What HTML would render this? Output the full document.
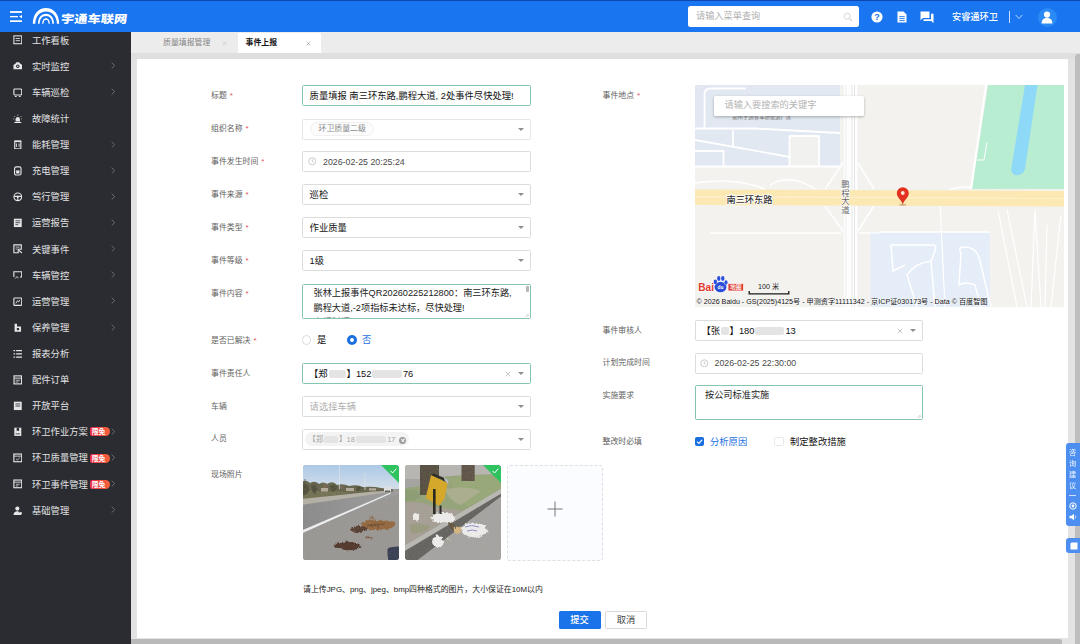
<!DOCTYPE html>
<html lang="zh-CN">
<head>
<meta charset="utf-8">
<title>事件上报</title>
<style>
*{box-sizing:border-box;margin:0;padding:0}
html,body{width:1080px;height:644px;overflow:hidden;background:#e3e3e3;font-family:"Liberation Sans","Noto Sans CJK SC",sans-serif;color:#333}
.abs{position:absolute}
#hdr{position:absolute;left:0;top:0;width:1080px;height:31.800px;background:#1975f0;border-top:1px solid #0d48b0;z-index:5}
#side{position:absolute;left:0;top:31px;width:131px;height:613px;background:#2a2c32;border-top:1px solid #2a2c32;z-index:4}
#tabs{position:absolute;left:131px;top:31px;width:949px;height:22px;background:#ececec;padding-top:1px}
#card{position:absolute;left:137px;top:59px;width:930.900px;height:579.300px;background:#fff}
.mi{position:absolute;left:0;width:131px;height:26px;color:#e2e2e2;font-size:9.3px;line-height:26px}
.mi .t{position:absolute;left:32px;top:0.600px;white-space:nowrap}
.mi svg.ic{position:absolute;left:12.800px;top:8.400px;width:9.600px;height:9.600px}
.mi .ar{position:absolute;left:111.500px;top:9.300px;width:4.400px;height:7.200px}
.badge{position:absolute;left:89.800px;top:8.700px;width:20px;height:9px;background:linear-gradient(90deg,#e9304c,#f4633a);border-radius:2px 4.500px 4.500px 2px;color:#fff;font-size:6.800px;line-height:9px;text-align:left;padding-left:2px;font-weight:bold}
.lb{position:absolute;margin-left:-0.500px;margin-top:0.700px;font-size:7.900px;color:#5f5f5f;line-height:12px;white-space:nowrap}
.lb i{font-style:normal;color:#e9505a;margin-left:3px}
.in{position:absolute;height:21px;border:1px solid #dcdcdc;border-radius:1.5px;background:#fff;font-size:9.2px;line-height:19px;color:#222;white-space:nowrap;overflow:hidden}
.in.f{border-color:#84c5b2}
.in .v{position:absolute;left:6.600px;top:0.700px;font-size:9.300px;color:#111}
.car{position:absolute;right:5.600px;top:8.200px;width:0;height:0;border-left:3.100px solid transparent;border-right:3.100px solid transparent;border-top:3.900px solid #8e8e8e}
.in .v.ph{color:#b0b0b0}

.tag{position:absolute;height:14px;line-height:12.600px;padding:0 7.500px;border:1px solid #f0f0f0;border-radius:7px;background:#fcfcfc;color:#8a8a8a;font-size:7.900px}
.tag2{position:absolute;height:13.200px;line-height:15.200px;padding:0 3.400px 0 2.900px;border-radius:7px;background:#f3f3f3;color:#a8a8a8;font-size:7.500px}
.tag2 b{display:inline-block;width:7px;height:7px;border-radius:50%;background:#9c9c9c;vertical-align:-1.200px;margin-left:1.300px;position:relative}
.tag2 b:before,.tag2 b:after{content:"";position:absolute;left:1.700px;top:3.150px;width:3.600px;height:0.700px;background:#fff;transform:rotate(45deg)}
.tag2 b:after{transform:rotate(-45deg)}
.blr{display:inline-block;height:8px;background:#e4e4e4;border-radius:2px;vertical-align:-1px;filter:blur(0.6px);margin:0 1px}
.ta{position:absolute;left:10.5px;top:1.5px;font-size:9.2px;line-height:15.3px;color:#222;white-space:nowrap}
.rad{width:9.500px;height:9.500px;border:1px solid #dcdcdc;border-radius:50%;background:#fff;margin-top:0.900px}
.rad.on{border:3px solid #1a6fe0;width:10px;height:10px}
.rt{font-size:9.300px;line-height:13px;white-space:nowrap;margin-top:0.900px}
.cb{width:9.500px;height:9.500px;border:1px solid #e8e8e8;border-radius:1.5px;background:#fff}
.cb.on{background:#1a6fe0;border-color:#1a6fe0}
</style>
</head>
<body>
<div id="hdr">
<svg class="abs" style="left:9.800px;top:10.100px" width="12.500" height="11.400" viewBox="0 0 12.500 11.400"><g fill="#fff"><rect x="0" y="0.100" width="12.500" height="1.800"/><rect x="0" y="5" width="8" height="1.300"/><rect x="0" y="9.300" width="12.500" height="2"/><path d="M9.100 5.600L12.500 3.700V7.500Z"/></g></svg>
<svg class="abs" style="left:31.600px;top:6.300px" width="28" height="17.600" preserveAspectRatio="none" viewBox="0 0 28 17"><g fill="#fff"><path d="M0.800 16.300C0.800 7 6.500 1 14 1S27.200 7 27.200 16.300L24.900 16.300C24.900 9.500 20.500 4.300 14 4.300S3.300 9.500 3.300 16.300Z"/><path d="M6 16.300C6 10.500 9 6.500 14 6.500S22 10.500 22 16.300L20.300 16.300C20.300 11.800 18 8.700 14 8.700S7.700 11.800 7.700 16.300Z"/><path d="M10.200 16.300C10.200 13 11.600 10.800 14 10.800S17.800 13 17.800 16.300L16.500 16.300C16.500 13.800 15.700 12.400 14 12.400S11.500 13.800 11.500 16.300Z"/></g></svg>
<div class="abs" style="left:61px;top:8.100px;font-size:11.300px;line-height:20px;font-weight:900;color:#fff;transform-origin:0 50%;transform:scaleX(1.170) skewX(-6deg);white-space:nowrap">宇通车联网</div>
<div class="abs" style="left:688px;top:4.5px;width:171px;height:21px;background:#fff;border-radius:2.5px"></div>
<div class="abs" style="left:696px;top:4.5px;font-size:9.2px;line-height:21px;color:#b0b0b0;white-space:nowrap">请输入菜单查询</div>
<svg class="abs" style="left:843px;top:10.5px" width="10" height="10" viewBox="0 0 10 10"><circle cx="4.2" cy="4.2" r="3" fill="none" stroke="#d6d6d6" stroke-width="1"/><path d="M6.4 6.400L9 9" stroke="#d6d6d6" stroke-width="1.100"/></svg>
<svg class="abs" style="left:871px;top:10px" width="12" height="12" viewBox="0 0 12 12"><circle cx="6" cy="6" r="5.6" fill="#fff"/><text x="6" y="9.2" font-size="9" font-weight="bold" text-anchor="middle" fill="#1a74ee" font-family="Liberation Sans, sans-serif">?</text></svg>
<svg class="abs" style="left:897px;top:10px" width="10" height="12" viewBox="0 0 10 12"><path d="M0.5 0.5H6.5L9.5 3.5V11.5H0.5Z" fill="#fff"/><path d="M2.3 5.6H7.7M2.3 7.6H7.7M2.3 9.6H7.7" stroke="#1a74ee" stroke-width="0.9"/></svg>
<svg class="abs" style="left:920px;top:9.5px" width="14" height="13" viewBox="0 0 14 13"><path d="M0.5 0.5H9.5V7H3L0.5 9.2Z" fill="#fff"/><path d="M11 2.8H13.5V12.3L11.2 10H3.5V8.2H11Z" fill="#fff"/></svg>
<div class="abs" style="left:952px;top:6px;font-size:9.2px;line-height:20px;color:#fff;font-weight:500;white-space:nowrap">安睿通环卫</div>
<div class="abs" style="left:1008.5px;top:10px;width:1px;height:12px;background:#cfe0fb"></div>
<svg class="abs" style="left:1015px;top:12.5px" width="8" height="6" viewBox="0 0 8 6"><path d="M0.7 1L4 4.5L7.3 1" fill="none" stroke="#cfe0fb" stroke-width="0.9"/></svg>
<div class="abs" style="left:1037.5px;top:6.5px;width:19px;height:19px;border-radius:50%;background:#2b8af5"></div>
<svg class="abs" style="left:1041px;top:9.5px" width="12" height="13" viewBox="0 0 12 13"><circle cx="6" cy="3.6" r="3.1" fill="#fff"/><path d="M0.6 12.5C0.6 8.6 2.8 7 6 7S11.4 8.6 11.4 12.5Z" fill="#fff"/></svg>
</div>
<div id="side">
<div class="mi" style="top:-5.0px"><svg class="ic" viewBox="0 0 11 11"><rect x="1" y="1" width="9" height="9" fill="none" stroke="#e6e6e6" stroke-width="1.2"/><path d="M3 4H8M3 6.5H8" stroke="#e6e6e6" stroke-width="1"/></svg><span class="t">工作看板</span></div>
<div class="mi" style="top:21.1px"><svg class="ic" viewBox="0 0 11 11"><path d="M0.5 4.5L3 3L4 1.5H7L8 3L10.5 4.5V9.5H0.5Z" fill="#e6e6e6"/><circle cx="5.5" cy="6" r="1.9" fill="#2a2c32"/><circle cx="5.5" cy="6" r="0.9" fill="#e6e6e6"/></svg><span class="t">实时监控</span><svg class="ar" style="left:111px" viewBox="0 0 5 8"><path d="M0.8 0.6L4.2 4L0.8 7.4" fill="none" stroke="#7d7f86" stroke-width="0.9"/></svg></div>
<div class="mi" style="top:47.2px"><svg class="ic" viewBox="0 0 11 11"><rect x="1" y="1.2" width="9" height="6.8" rx="1" fill="none" stroke="#e6e6e6" stroke-width="1.3"/><path d="M2.2 9.8H4.2M6.8 9.8H8.8" stroke="#e6e6e6" stroke-width="1.4"/></svg><span class="t">车辆巡检</span><svg class="ar" style="left:111px" viewBox="0 0 5 8"><path d="M0.8 0.6L4.2 4L0.8 7.4" fill="none" stroke="#7d7f86" stroke-width="0.9"/></svg></div>
<div class="mi" style="top:73.4px"><svg class="ic" viewBox="0 0 11 11"><path d="M3 8.5V6A2.5 2.5 0 0 1 8 6V8.5Z" fill="#e6e6e6"/><path d="M1.5 9.8H9.5" stroke="#e6e6e6" stroke-width="1.3"/><path d="M5.5 0.6V2M1.3 2.3L2.3 3.3M9.7 2.3L8.7 3.3M0.3 5.6H1.6M9.4 5.6H10.7" stroke="#e6e6e6" stroke-width="0.8"/></svg><span class="t">故障统计</span></div>
<div class="mi" style="top:99.5px"><svg class="ic" viewBox="0 0 11 11"><rect x="2" y="1.8" width="7" height="8.4" fill="none" stroke="#e6e6e6" stroke-width="1.3"/><path d="M1.5 1H9.5" stroke="#e6e6e6" stroke-width="1.2"/><path d="M4 4V8M7 4V8" stroke="#e6e6e6" stroke-width="1"/></svg><span class="t">能耗管理</span><svg class="ar" style="left:111px" viewBox="0 0 5 8"><path d="M0.8 0.6L4.2 4L0.8 7.4" fill="none" stroke="#7d7f86" stroke-width="0.9"/></svg></div>
<div class="mi" style="top:125.6px"><svg class="ic" viewBox="0 0 11 11"><rect x="1.8" y="1" width="7.4" height="9.3" rx="1.8" fill="none" stroke="#e6e6e6" stroke-width="1.3"/><rect x="3.6" y="5" width="3.8" height="3.6" fill="#e6e6e6"/></svg><span class="t">充电管理</span><svg class="ar" style="left:111px" viewBox="0 0 5 8"><path d="M0.8 0.6L4.2 4L0.8 7.4" fill="none" stroke="#7d7f86" stroke-width="0.9"/></svg></div>
<div class="mi" style="top:151.7px"><svg class="ic" viewBox="0 0 11 11"><circle cx="5.5" cy="5.5" r="4.4" fill="none" stroke="#e6e6e6" stroke-width="1.3"/><path d="M1.3 5H9.7M5.5 6V9.8" stroke="#e6e6e6" stroke-width="1.2"/><circle cx="5.5" cy="5.6" r="1.2" fill="#e6e6e6"/></svg><span class="t">驾行管理</span><svg class="ar" style="left:111px" viewBox="0 0 5 8"><path d="M0.8 0.6L4.2 4L0.8 7.4" fill="none" stroke="#7d7f86" stroke-width="0.9"/></svg></div>
<div class="mi" style="top:177.8px"><svg class="ic" viewBox="0 0 11 11"><rect x="1" y="0.8" width="9" height="9.6" fill="#e6e6e6"/><path d="M2.8 3.2H8.2M2.8 5.4H8.2M2.8 7.6H6" stroke="#2a2c32" stroke-width="0.9"/></svg><span class="t">运营报告</span><svg class="ar" style="left:111px" viewBox="0 0 5 8"><path d="M0.8 0.6L4.2 4L0.8 7.4" fill="none" stroke="#7d7f86" stroke-width="0.9"/></svg></div>
<div class="mi" style="top:204.0px"><svg class="ic" viewBox="0 0 11 11"><path d="M1 1H9.5V6H6V10H1Z" fill="none" stroke="#e6e6e6" stroke-width="1.3"/><path d="M3 3.6H7.5M3 5.8H5" stroke="#e6e6e6" stroke-width="0.9"/><path d="M7 7.5L10.3 10.3" stroke="#e6e6e6" stroke-width="1.3"/></svg><span class="t">关键事件</span><svg class="ar" style="left:111px" viewBox="0 0 5 8"><path d="M0.8 0.6L4.2 4L0.8 7.4" fill="none" stroke="#7d7f86" stroke-width="0.9"/></svg></div>
<div class="mi" style="top:230.1px"><svg class="ic" viewBox="0 0 11 11"><path d="M1 8V2H10V8H8" fill="none" stroke="#e6e6e6" stroke-width="1.3"/><path d="M2.5 9.8L4.6 7.6L6.2 9.4" fill="none" stroke="#e6e6e6" stroke-width="1"/></svg><span class="t">车辆管控</span><svg class="ar" style="left:111px" viewBox="0 0 5 8"><path d="M0.8 0.6L4.2 4L0.8 7.4" fill="none" stroke="#7d7f86" stroke-width="0.9"/></svg></div>
<div class="mi" style="top:256.2px"><svg class="ic" viewBox="0 0 11 11"><rect x="1" y="1.2" width="9" height="8.4" rx="0.8" fill="none" stroke="#e6e6e6" stroke-width="1.3"/><path d="M3.3 7.3L5.2 4.2L6.3 5.8L7.8 3.4" fill="none" stroke="#e6e6e6" stroke-width="1"/></svg><span class="t">运营管理</span><svg class="ar" style="left:111px" viewBox="0 0 5 8"><path d="M0.8 0.6L4.2 4L0.8 7.4" fill="none" stroke="#7d7f86" stroke-width="0.9"/></svg></div>
<div class="mi" style="top:282.3px"><svg class="ic" viewBox="0 0 11 11"><path d="M1.8 0.8V10H9.2V4H4.6V0.8Z" fill="#e6e6e6"/><rect x="4.4" y="5.8" width="2.6" height="2.4" fill="#2a2c32"/></svg><span class="t">保养管理</span><svg class="ar" style="left:111px" viewBox="0 0 5 8"><path d="M0.8 0.6L4.2 4L0.8 7.4" fill="none" stroke="#7d7f86" stroke-width="0.9"/></svg></div>
<div class="mi" style="top:308.4px"><svg class="ic" viewBox="0 0 11 11"><path d="M3.6 1.8H10.4M3.6 5.5H10.4M3.6 9.2H10.4" stroke="#e6e6e6" stroke-width="1.4"/><path d="M0.6 1.8H2.4M0.6 5.5H2.4M0.6 9.2H2.4" stroke="#e6e6e6" stroke-width="1.4"/></svg><span class="t">报表分析</span></div>
<div class="mi" style="top:334.6px"><svg class="ic" viewBox="0 0 11 11"><rect x="1.2" y="1" width="8.6" height="9.2" fill="none" stroke="#e6e6e6" stroke-width="1.3"/><path d="M1.5 3.6H9.5" stroke="#e6e6e6" stroke-width="1.1"/><path d="M3 6H8M3 8H6.5" stroke="#e6e6e6" stroke-width="0.9"/></svg><span class="t">配件订单</span></div>
<div class="mi" style="top:360.7px"><svg class="ic" viewBox="0 0 11 11"><rect x="1" y="0.8" width="9" height="9.6" fill="#e6e6e6"/><path d="M2.8 3.4H8.2M2.8 5.8H8.2" stroke="#2a2c32" stroke-width="1"/></svg><span class="t">开放平台</span></div>
<div class="mi" style="top:386.8px"><svg class="ic" viewBox="0 0 11 11"><path d="M1.5 0.8H9.5V10.2H1.5Z" fill="#e6e6e6"/><path d="M4.2 0.8V5L5.6 4L7 5V0.8Z" fill="#2a2c32"/><path d="M3 7.8H8" stroke="#2a2c32" stroke-width="0.9"/></svg><span class="t">环卫作业方案</span><span class="badge">限免</span><svg class="ar" style="left:111.300px" viewBox="0 0 5 8"><path d="M0.8 0.6L4.2 4L0.8 7.4" fill="none" stroke="#7d7f86" stroke-width="0.9"/></svg></div>
<div class="mi" style="top:412.9px"><svg class="ic" viewBox="0 0 11 11"><rect x="1" y="1.2" width="9" height="8.8" fill="none" stroke="#e6e6e6" stroke-width="1.3"/><path d="M1 3.6H10" stroke="#e6e6e6" stroke-width="1"/><path d="M3.4 6.6L5 8L7.8 5.4" fill="none" stroke="#e6e6e6" stroke-width="0.9"/></svg><span class="t">环卫质量管理</span><span class="badge">限免</span><svg class="ar" style="left:111.300px" viewBox="0 0 5 8"><path d="M0.8 0.6L4.2 4L0.8 7.4" fill="none" stroke="#7d7f86" stroke-width="0.9"/></svg></div>
<div class="mi" style="top:439.0px"><svg class="ic" viewBox="0 0 11 11"><rect x="1" y="1.2" width="9" height="8.8" fill="none" stroke="#e6e6e6" stroke-width="1.3"/><path d="M1 3.6H10" stroke="#e6e6e6" stroke-width="1"/><path d="M3.2 6H7.8M3.2 8H6" stroke="#e6e6e6" stroke-width="0.9"/></svg><span class="t">环卫事件管理</span><span class="badge">限免</span><svg class="ar" style="left:111.300px" viewBox="0 0 5 8"><path d="M0.8 0.6L4.2 4L0.8 7.4" fill="none" stroke="#7d7f86" stroke-width="0.9"/></svg></div>
<div class="mi" style="top:465.2px"><svg class="ic" viewBox="0 0 11 11"><circle cx="5" cy="3" r="2.4" fill="#e6e6e6"/><path d="M0.6 10.4C0.6 7.4 2.4 6 5 6S9.4 7.4 9.4 10.4Z" fill="#e6e6e6"/><path d="M6.2 6.4L10.6 10.6" stroke="#2a2c32" stroke-width="0.9"/><circle cx="8.7" cy="8.4" r="1.5" fill="#e6e6e6"/></svg><span class="t">基础管理</span><svg class="ar" style="left:111px" viewBox="0 0 5 8"><path d="M0.8 0.6L4.2 4L0.8 7.4" fill="none" stroke="#7d7f86" stroke-width="0.9"/></svg></div>
</div>
<div id="tabs">
<div class="abs" style="left:107px;top:1.5px;width:83px;height:20.200px;background:#fff"></div>
<div class="abs" style="left:32px;top:1.200px;font-size:7.900px;line-height:21px;color:#858585;white-space:nowrap">质量填报管理</div>
<svg class="abs" style="left:91px;top:9.5px" width="5" height="5" viewBox="0 0 5 5"><path d="M0.7 0.7L4.3 4.3M4.3 0.7L0.7 4.3" stroke="#bdbdbd" stroke-width="0.600"/></svg>
<div class="abs" style="left:114.500px;top:1.200px;font-size:7.9px;line-height:21px;color:#111;font-weight:bold;white-space:nowrap">事件上报</div>
<svg class="abs" style="left:175px;top:9.5px" width="5" height="5" viewBox="0 0 5 5"><path d="M0.7 0.7L4.3 4.3M4.3 0.7L0.7 4.3" stroke="#999" stroke-width="0.6"/></svg>
</div>
<div id="card">
<div class="lb" style="left:74.5px;top:30.6px">标题<i>*</i></div>
<div class="in f" style="left:165.0px;top:26.3px;width:229.0px;height:21.0px"><span class="v">质量填报 南三环东路,鹏程大道, 2处事件尽快处理!</span></div>
<div class="lb" style="left:74.5px;top:63.5px">组织名称<i>*</i></div>
<div class="in " style="left:165.0px;top:59.600px;width:229.0px;height:21.200px;border-color:#e6e6e6"><span class="tag" style="left:7px;top:2.800px">环卫质量二级</span><span class="car"></span></div>
<div class="lb" style="left:74.5px;top:96.4px">事件发生时间<i>*</i></div>
<div class="in " style="left:165.0px;top:92.0px;width:229.0px;height:21.0px"><svg class="abs" style="left:4.800px;top:5.300px" width="8.600" height="8.600" viewBox="0 0 8 8"><circle cx="4" cy="4" r="3.3" fill="none" stroke="#bbb" stroke-width="0.7"/><path d="M4 2V4.2L5.4 5" fill="none" stroke="#bbb" stroke-width="0.7"/></svg><span class="v" style="left:20px;color:#4a4a4a;font-size:8.800px">2026-02-25 20:25:24</span></div>
<div class="lb" style="left:74.5px;top:129.3px">事件来源<i>*</i></div>
<div class="in " style="left:165.0px;top:125.2px;width:229.0px;height:21.0px"><span class="v">巡检</span><span class="car"></span></div>
<div class="lb" style="left:74.5px;top:162.2px">事件类型<i>*</i></div>
<div class="in " style="left:165.0px;top:158.2px;width:229.0px;height:21.0px"><span class="v">作业质量</span><span class="car"></span></div>
<div class="lb" style="left:74.5px;top:195.2px">事件等级<i>*</i></div>
<div class="in " style="left:165.0px;top:191.0px;width:229.0px;height:21.0px"><span class="v">1级</span><span class="car"></span></div>
<div class="lb" style="left:74.5px;top:228.0px">事件内容<i>*</i></div>
<div class="in f" style="left:165.0px;top:224.5px;width:229.0px;height:35.0px"><div class="ta">张林上报事件QR20260225212800：南三环东路,<br>鹏程大道,-2项指标未达标，尽快处理!</div><div class="ta" style="top:30.800px;color:#888">上报时间：2026-02-25 20:25:24</div><span class="abs" style="right:1px;top:1px;width:3px;height:6px;background:#b5b5b5;border-radius:1px"></span><svg class="abs" style="right:1px;bottom:1px" width="4" height="4" viewBox="0 0 4 4"><path d="M0.5 3.8L3.8 0.5M2.2 3.8L3.8 2.2" stroke="#999" stroke-width="0.5"/></svg></div>
<div class="lb" style="left:74.5px;top:275.5px">是否已解决<i>*</i></div>
<span class="abs rad" style="left:164.5px;top:275.5px"></span><span class="abs rt" style="left:180px;top:274px;color:#111">是</span>
<span class="abs rad on" style="left:209.5px;top:275.5px"></span><span class="abs rt" style="left:225px;top:274px;color:#1a6fe0">否</span>
<div class="lb" style="left:74.5px;top:308.0px">事件责任人</div>
<div class="in f" style="left:165.0px;top:304.0px;width:229.0px;height:21.0px"><span class="v" style="left:6px">【郑<span class="blr" style="width:17px"></span>】152<span class="blr" style="width:29.500px"></span>76</span><svg class="abs" style="right:19px;top:7px" width="6" height="6" viewBox="0 0 6 6"><path d="M0.7 0.7L5.3 5.3M5.3 0.7L0.7 5.3" stroke="#aaa" stroke-width="0.7"/></svg><span class="car"></span></div>
<div class="lb" style="left:74.5px;top:341.0px">车辆</div>
<div class="in " style="left:165.0px;top:337.0px;width:229.0px;height:21.0px"><span class="v ph">请选择车辆</span><span class="car"></span></div>
<div class="lb" style="left:74.5px;top:373.8px">人员</div>
<div class="in " style="left:165.0px;top:369.6px;width:229.0px;height:21.0px"><span class="tag2" style="left:2.400px;top:2.900px">【郑<span class="blr" style="width:13.700px;height:7px"></span>】18<span class="blr" style="width:30.400px;height:7px"></span>17 <b></b></span><span class="car"></span></div>
<div class="lb" style="left:74.5px;top:409.0px">现场照片</div>
<div class="abs ph1" style="left:165.800px;top:405.500px;width:95.800px;height:95.600px;border-radius:3px;overflow:hidden">
<svg width="96" height="96" viewBox="0 0 96 96" style="position:absolute;left:0;top:0">
<defs><filter id="pb" x="-10%" y="-10%" width="120%" height="120%"><feGaussianBlur stdDeviation="0.550"/></filter>
<filter id="pb2" x="-20%" y="-20%" width="140%" height="140%"><feTurbulence type="fractalNoise" baseFrequency="0.350" numOctaves="2" seed="4" result="n"/><feDisplacementMap in="SourceGraphic" in2="n" scale="5" xChannelSelector="R" yChannelSelector="G"/><feGaussianBlur stdDeviation="0.600"/></filter>
<filter id="gr" x="0" y="0" width="100%" height="100%"><feTurbulence type="fractalNoise" baseFrequency="0.900" numOctaves="2" seed="7"/><feColorMatrix type="matrix" values="0 0 0 0 0.500  0 0 0 0 0.500  0 0 0 0 0.500  0.350 0.350 0 -0.180 0"/></filter>
<linearGradient id="sky" x1="0" y1="0" x2="0" y2="1"><stop offset="0" stop-color="#a8c9ee"/><stop offset="1" stop-color="#d6e4f0"/></linearGradient>
<linearGradient id="rd1" x1="0" y1="0" x2="1" y2="0"><stop offset="0" stop-color="#858585"/><stop offset="1" stop-color="#9a9a9a"/></linearGradient></defs>
<rect width="96" height="96" fill="#969390"/>
<g filter="url(#pb)">
<rect x="-2" y="-2" width="100" height="26" fill="url(#sky)"/>
<path d="M-2 34L96 24V98H-2Z" fill="#969390"/>
<path d="M-2 38L88 26L96 25V29L-2 68Z" fill="url(#rd1)"/>
<path d="M-2 17Q3 14 7 18Q12 15 16 19Q20 16 24 19Q30 15 34 20Q40 18 46 21Q54 19 60 22Q70 21 78 23L90 24.500V26.500L-2 36Z" fill="#5c5a40"/>
<path d="M-2 26Q10 24 20 27Q30 25 40 27L60 26L-2 35Z" fill="#6d6a48"/>
<path d="M-2 34L70 26.500L88 25.800V26.800L-2 40Z" fill="#b4afa3"/>
<path d="M18 23H25V26.500H18ZM43 23H51V26H43ZM66 23.300H73V25.500H66Z" fill="#b3a898"/>
<path d="M-2 20Q2 17 5 21Q8 25 4 29L-2 31ZM8 21Q11 18 14 22Q15 27 10 28ZM27 21Q31 18 34 22Q34 26 29 27ZM53 22Q56 20 59 23Q58 26 54 26Z" fill="#47462f"/>
<path d="M20 19Q23 17 25 20L24 23H20ZM36 21Q39 19 41 22L40 24H36Z" fill="#6d5f48"/>
<path d="M2 14V30M12 18V30" stroke="#4a4434" stroke-width="0.800"/>
<path d="M36.400 0V24M62 8V25" stroke="#e4ebf0" stroke-width="0.700"/>
<rect x="81" y="22" width="7" height="4.800" rx="1.200" fill="#e6e6e6"/>
<rect x="82" y="25.500" width="5" height="1.600" fill="#555"/>
<path d="M-2 65.800L87 27.800L88 28.600L-2 68.800Z" fill="#f4f4f4"/>
</g>
<g filter="url(#pb2)">
<path d="M58 60Q64 53 74 55Q86 54 93 58Q92 64 80 64Q68 66 58 64Z" fill="#8f5e30"/>
<path d="M64 60Q72 57 82 59Q78 62 68 62Z" fill="#6b4426"/>
<path d="M66 52Q70 50 72 53Q69 55 66 52Z" fill="#8a6a48"/>
<path d="M47 64Q52 60 60 61Q66 63 62 66Q54 68 47 66Z" fill="#4e3222"/>
<path d="M31 80Q36 76 46 77Q58 78 59 82Q52 86 42 85Q32 84 31 80Z" fill="#47291c"/>
<path d="M62 72Q66 70 70 73Q66 75 62 72Z" fill="#7a5238"/>
</g>
<path d="M84.500 84Q85 81.500 96 81.500V96H85.500Q84 90 84.500 84Z" fill="#2b3246" filter="url(#pb)"/>
<rect width="96" height="96" filter="url(#gr)" opacity="0.500"/>
<path d="M78 0H93Q96 0 96 3V18Z" fill="#2fc35f"/>
<path d="M87.500 5.800L89.600 8L93.300 3.600" fill="none" stroke="#fff" stroke-width="1"/>
</svg></div>
<div class="abs ph2" style="left:267.800px;top:405.500px;width:95.800px;height:95.600px;border-radius:3px;overflow:hidden">
<svg width="96" height="96" viewBox="0 0 96 96" style="position:absolute;left:0;top:0">
<rect width="96" height="96" fill="#a3a19e"/>
<g filter="url(#pb)">
<rect x="-2" y="-2" width="100" height="16" fill="#b7b5b1"/>
<path d="M-2 24Q12 20 22 22L34 12L60 10L98 9V26L50 56L-2 50Z" fill="#91a172"/>
<path d="M44 14Q70 8 98 12V22L62 42Q50 30 44 14Z" fill="#94a670"/>
<path d="M40 24Q60 20 76 26L56 40Q44 36 40 24Z" fill="#a9ad8a"/>
<path d="M-2 37Q16 36 30 42L60 46L-2 90Z" fill="#a39c92"/>
<path d="M-2 26Q8 22 18 28Q14 36 4 36L-2 37Z" fill="#879a6c"/>
<path d="M4 60Q16 56 26 62Q18 70 6 68Z" fill="#97987a"/>
<rect x="15" y="-2" width="19" height="32" fill="#4e4434"/>
<rect x="56.500" y="-2" width="13.200" height="18" fill="#57483a"/>
<path d="M98 29L-2 94V98H98Z" fill="#a3a19e"/>
<path d="M98 22.500L-2 81.500V87.500L98 28Z" fill="#b9b7b0"/>
<path d="M98 27.500L-2 87V98H9L98 30Z" fill="#5c5a57"/>
<path d="M9 98L98 30V98Z" fill="#a3a19e"/>
<path d="M26 10L42.700 18L39.500 33.700L34 40.800L20.700 33Z" fill="#d9a514"/>
<path d="M28.500 8.600L38.300 12.500L42.700 18L34 13.500L26 10Z" fill="#1c1a16"/>
<path d="M38.500 12L43.500 15.500L43 19L40 16Z" fill="#b8bcc4"/>
<path d="M28 24H30.600V52H28ZM34.500 40.500H36.500V49H34.500Z" fill="#15130f"/>
</g>
<g filter="url(#pb2)" fill="#f3f2f0">
<path d="M8 50Q11 46 14.500 50Q16 55 11 56Q7 55 8 50Z"/>
<path d="M26 53Q29 47 36 49Q42 45 46 49Q50 50 50 55Q44 59 36 58Q28 59 26 53Z"/>
<path d="M56 63Q62 56 72 58Q83 60 83 67Q76 74 66 72Q57 70 56 63Z"/>
<path d="M27 75Q30 68 36 72Q41 78 36 82Q27 83 27 75Z"/>
<path d="M48 64Q52 59 56 64Q55 70 50 69Z" fill="#d9b476"/>
<path d="M41 73Q43 72 45 74Q43 75.500 41 73Z" fill="#e8cfa0"/>
<path d="M44 56Q48 58 50 64L47 66Q44 62 44 56Z" fill="#5a4a30"/>
</g>
<path d="M60 62Q66 59 74 62M62 66Q68 64 72 66" stroke="#8a86c8" stroke-width="1" fill="none" filter="url(#pb)"/>
<rect width="96" height="96" filter="url(#gr)" opacity="0.500"/>
<path d="M78 0H93Q96 0 96 3V18Z" fill="#2fc35f"/>
<path d="M87.500 5.800L89.600 8L93.300 3.600" fill="none" stroke="#fff" stroke-width="1"/>
</svg></div>
<div class="abs" style="left:370px;top:405.6px;width:96px;height:96px;border:1px dashed #dfdfdf;border-radius:3px;background:#fbfcff"></div>
<svg class="abs" style="left:410px;top:441.5px" width="16" height="16" viewBox="0 0 16 16"><path d="M8 0.500V15.500M0.500 8H15.500" stroke="#777" stroke-width="1"/></svg>
<div class="abs" style="left:166px;top:524.800px;font-size:7.900px;line-height:12px;color:#222;white-space:nowrap">请上传JPG、png、jpeg、bmp四种格式的图片，大小保证在10M以内</div>
<div class="abs" style="left:421.5px;top:551.800px;width:42px;height:18.500px;background:#1b73ea;border-radius:1.500px;color:#fff;font-size:9.300px;font-weight:500;line-height:18.500px;text-align:center">提交</div>
<div class="abs" style="left:468px;top:551.800px;width:42px;height:18.500px;background:#fff;border:1px solid #d9d9d9;border-radius:1.500px;color:#444;font-size:9.300px;line-height:16.500px;text-align:center">取消</div>
<div class="lb" style="left:466.0px;top:30.6px">事件地点<i>*</i></div>
<div class="abs" id="map" style="left:557.5px;top:26.299999999999997px;width:369.5px;height:222px;overflow:hidden;background:#f3f2ef">
<svg class="abs" style="left:0;top:0" width="369.5" height="222" viewBox="0 0 369.5 222">
<defs><filter id="mb" x="-5%" y="-5%" width="110%" height="110%"><feGaussianBlur stdDeviation="0.45"/></filter></defs>
<g filter="url(#mb)">
<rect x="0" y="0" width="369.5" height="222" fill="#f3f2ef"/>
<!-- blue-ish industrial block top-left -->
<rect x="0" y="0" width="145" height="82" fill="#e1e8f1"/>
<rect x="94.5" y="51" width="29" height="30" fill="#f1f1ef"/>
<g fill="none" stroke="#fff" stroke-width="1.8" stroke-linecap="round">
<path d="M9.5 43V9Q9.5 3.5 16 3.5H50"/>
<path d="M0 43.5H60L145 48"/>
<path d="M0 55Q40 62 95 72"/>
<path d="M38 46V62M28.5 66V82"/>
<path d="M0 66H28"/>
<path d="M94.5 51H124M94.5 51V81M124 51V81"/>
<path d="M0 81.5H145"/>
</g>
<!-- lower right light blue -->
<rect x="175.500" y="147" width="119.500" height="75" fill="#e5edf8"/>
<g fill="none" stroke="#fff" stroke-width="1.5">
<path d="M196 160H238Q242 160 240 166L236 176Q220 178 212 190L222 222"/>
<path d="M196 160L198 186L210 180"/>
<path d="M236 176L240 222"/>
<path d="M266 168Q262 162 270 162Q280 162 284 172L296 222"/>
<path d="M266 168L264 200Q270 196 280 200L286 222"/>
<path d="M245 118L250 222" stroke-width="1.2"/>
<path d="M184 147H295"/>
</g>
<!-- thin lines lower right -->
<g fill="none" stroke="#fff" stroke-width="1.2">
<path d="M303 125L322 222M312 125L332 222"/>
<path d="M340 125L336 222M340 125L346 222M352 140L350 222"/>
<path d="M366 130L356 222"/>
</g>
<!-- horizontal minor road lower-left -->
<path d="M15 148H146" stroke="#fff" stroke-width="1.6" fill="none"/>
<path d="M163 148H184" stroke="#fff" stroke-width="1.4" fill="none"/>
<!-- green park -->
<path d="M293 0H369.5V104H277Z" fill="#b9edd2"/>
<path d="M330 0H342.5L330 84Q328 91 320 90Q315 88 316.5 82Z" fill="#8fd9f8"/>
<path d="M291 0L276 104" stroke="#fff" stroke-width="2" fill="none"/>
<path d="M282.5 75H289L292 57" stroke="#fff" stroke-width="1" fill="none"/>
<path d="M255 105Q262 101.500 276 102.500" stroke="#fff" stroke-width="1.500" fill="none"/>
<!-- vertical road -->
<rect x="147.500" y="0" width="16" height="222" fill="#fdfdfd"/>
<path d="M148 0V222M163.300 0V222M150.800 0V222" stroke="#e4e4e4" stroke-width="0.600"/>
<path d="M159.500 0V222M157 0V222" stroke="#dcdcdc" stroke-width="0.700"/>
<g fill="none" stroke="#fff" stroke-width="1.500">
<path d="M148 78L130 104M163 78L179 104M130 121L148 146M179 121L163 146"/>
<path d="M0 98Q40 92 70 104" /><path d="M75 100Q95 88 120 104"/>
</g>
<!-- main road -->
<path d="M0 104.500L369.500 106V121.500L0 120Z" fill="#fbe8b3"/>
<path d="M0 111.800L369.500 113.300" stroke="#fdf0cd" stroke-width="1.400"/>
</g>
<text x="31.500" y="118.200" font-size="9.200" font-weight="500" fill="#333" font-family="Liberation Sans, Noto Sans CJK SC, sans-serif" stroke="#fff" stroke-width="1.500" paint-order="stroke">南三环东路</text>
<g font-size="8.400" fill="#666" font-family="Liberation Sans, Noto Sans CJK SC, sans-serif" text-anchor="middle" stroke="#fff" stroke-width="1.200" paint-order="stroke">
<text x="150.500" y="102">鹏</text><text x="150.500" y="110.500">程</text><text x="150.500" y="119">大</text><text x="150.500" y="127.500">道</text>
</g>
<text x="37.200" y="33.900" font-size="5.400" fill="#7a7a7a" font-family="Liberation Sans, Noto Sans CJK SC, sans-serif">郑州宇通客车新能源厂区</text>
<!-- marker -->
<ellipse cx="207.800" cy="119.800" rx="3.500" ry="1" fill="#b58a60" opacity="0.600"/>
<path d="M207.800 119.500C206.500 114.500 201.800 112.500 201.800 108.200A6 6 0 0 1 213.800 108.200C213.800 112.500 209.100 114.500 207.800 119.500Z" fill="#e2311f"/>
<circle cx="207.800" cy="108" r="1.900" fill="#ffe9d8"/>
<!-- scale -->
<text x="73.500" y="204" font-size="7.200" fill="#222" font-family="Liberation Sans, Noto Sans CJK SC, sans-serif" text-anchor="middle">100 米</text>
<path d="M54.200 206V208.800H93.800V206" fill="none" stroke="#1a1a1a" stroke-width="1.300"/>
<!-- baidu logo -->
<g font-family="Liberation Sans, Noto Sans CJK SC, sans-serif">
<text x="3.300" y="205.700" font-size="10.800" font-weight="bold" fill="#de3a2e" stroke="#fff" stroke-width="1.200" paint-order="stroke" textLength="15.800" lengthAdjust="spacingAndGlyphs">Bai</text>
<g fill="#2b4fd8" stroke="#fff" stroke-width="0.800" paint-order="stroke">
<ellipse cx="25.500" cy="202" rx="6" ry="5.200"/><ellipse cx="20.300" cy="196.900" rx="1.700" ry="2.300"/><ellipse cx="23.800" cy="193.500" rx="1.700" ry="2.400"/><ellipse cx="27.800" cy="193.500" rx="1.700" ry="2.400"/><ellipse cx="31" cy="197.500" rx="1.600" ry="2.200"/>
</g>
<text x="25.500" y="204" font-size="4.800" font-weight="bold" fill="#fff" text-anchor="middle">du</text>
<rect x="33" y="198.400" width="15.600" height="7.600" rx="0.800" fill="#de3a2e" stroke="#fff" stroke-width="0.800"/>
<text x="40.800" y="204.300" font-size="5.800" font-weight="500" fill="#fff" text-anchor="middle">地图</text>
</g>
<text x="1.500" y="218.500" font-size="7.150" fill="#111" font-family="Liberation Sans, Noto Sans CJK SC, sans-serif" stroke="#fff" stroke-width="0.800" paint-order="stroke" stroke-opacity="0.700">© 2026 Baidu - GS(2025)4125号 - 甲测资字11111342 - 京ICP证030173号 - Data © 百度智图</text>
</svg>
<div class="abs" style="left:19.500px;top:10.700px;width:150px;height:20px;background:#fff;border-radius:1.500px;box-shadow:0 1px 3px rgba(0,0,0,0.28)"></div>
<div class="abs" style="left:30px;top:10.700px;font-size:9.200px;line-height:19.500px;color:#b4b4b4;white-space:nowrap">请输入要搜索的关键字</div>
</div>
<div class="lb" style="left:466.0px;top:265.0px">事件审核人</div>
<div class="in " style="left:557.5px;top:261.0px;width:228.5px;height:21.0px"><span class="v" style="left:6px">【张<span class="blr" style="width:7.500px"></span>】180<span class="blr" style="width:29px"></span>13</span><svg class="abs" style="right:19px;top:7px" width="6" height="6" viewBox="0 0 6 6"><path d="M0.7 0.7L5.3 5.3M5.3 0.7L0.7 5.3" stroke="#aaa" stroke-width="0.7"/></svg><span class="car"></span></div>
<div class="lb" style="left:466.0px;top:297.7px">计划完成时间</div>
<div class="in " style="left:557.5px;top:293.5px;width:228.5px;height:21.0px"><svg class="abs" style="left:4.800px;top:5.300px" width="8.600" height="8.600" viewBox="0 0 8 8"><circle cx="4" cy="4" r="3.3" fill="none" stroke="#bbb" stroke-width="0.7"/><path d="M4 2V4.2L5.4 5" fill="none" stroke="#bbb" stroke-width="0.7"/></svg><span class="v" style="left:19px;color:#4a4a4a;font-size:8.800px">2026-02-25 22:30:00</span></div>
<div class="lb" style="left:466.0px;top:330.0px">实施要求</div>
<div class="in f" style="left:557.5px;top:326.0px;width:228.5px;height:34.5px"><div class="ta" style="left:9.5px">按公司标准实施</div><svg class="abs" style="right:1px;bottom:1px" width="4" height="4" viewBox="0 0 4 4"><path d="M0.5 3.8L3.8 0.5M2.2 3.8L3.8 2.2" stroke="#999" stroke-width="0.5"/></svg></div>
<div class="lb" style="left:466.0px;top:376.5px">整改时必填</div>
<span class="abs cb on" style="left:557.5px;top:377.5px"><svg width="9" height="9" viewBox="0 0 9 9" style="position:absolute;left:-0.800px;top:-1px"><path d="M2 4.6L3.9 6.4L7.1 2.8" fill="none" stroke="#fff" stroke-width="1.1"/></svg></span><span class="abs rt" style="left:573px;top:376px;color:#1a6fe0">分析原因</span>
<span class="abs cb" style="left:637px;top:377.5px"></span><span class="abs rt" style="left:653px;top:376px;color:#111">制定整改措施</span>
</div>
<div class="abs" style="left:131px;top:52.700px;width:949px;height:6.300px;background:#dfdfdf"></div>
<div class="abs" style="left:1074.800px;top:53.500px;width:6px;height:591px;background:#bebebe;border-radius:3px 0 0 0"></div>
<div class="abs" style="left:131px;top:638.700px;width:931px;height:6px;background:#b9b9b9;border-radius:0 3px 0 0"></div>
<div class="abs" style="left:1066px;top:442.500px;width:14px;height:83px;background:#4d8ff0;border-radius:3px 0 0 3px;z-index:6">
<div class="abs" style="left:2.500px;top:4px;width:8px;font-size:7.200px;line-height:11.300px;color:#fff;text-align:center;opacity:0.92">咨询建议</div>
<div class="abs" style="left:3px;top:52.600px;width:7px;height:0.800px;background:#cfe0fb"></div>
<svg class="abs" style="left:2.500px;top:59.300px" width="8" height="8" viewBox="0 0 8 8"><circle cx="4" cy="4" r="3.200" fill="none" stroke="#fff" stroke-width="1"/><circle cx="4" cy="4" r="1.400" fill="#fff"/></svg>
<svg class="abs" style="left:2.500px;top:70.800px" width="8" height="8" viewBox="0 0 8 8"><path d="M0.500 2.800H2.500L5 0.800V7.200L2.500 5.200H0.500Z" fill="#fff"/><path d="M6.200 2.500Q7.400 4 6.200 5.500" stroke="#fff" stroke-width="0.700" fill="none"/></svg>
</div>
<div class="abs" style="left:1066px;top:538.300px;width:14px;height:14.500px;background:#4d8ff0;border-radius:3px 0 0 3px;z-index:6">
<svg class="abs" style="left:3.500px;top:3.500px" width="8" height="8" viewBox="0 0 8 8"><path d="M1.500 0.500H7.500V7.500H0.500V1.500Z" fill="#fff"/></svg>
</div>
</body>
</html>
